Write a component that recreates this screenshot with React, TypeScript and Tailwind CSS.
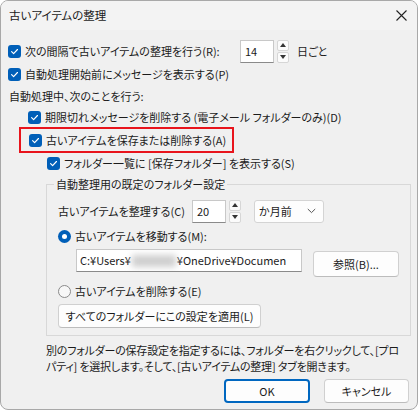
import React from 'react';

const font = { fontFamily: '"Noto Sans CJK JP", "Noto Sans", sans-serif' };

function Check() {
  return (
    <span className="inline-flex h-[13px] w-[13px] shrink-0 items-center justify-center rounded-[3px] bg-[#005fb8]">
      <svg width="9" height="9" viewBox="0 0 10 10" fill="none">
        <path d="M1.8 5.2 L4 7.3 L8.3 2.8" stroke="white" strokeWidth="1.3" strokeLinecap="round" strokeLinejoin="round" />
      </svg>
    </span>
  );
}

function Radio({ on }: { on?: boolean }) {
  return on ? (
    <span className="inline-flex h-[13px] w-[13px] shrink-0 items-center justify-center rounded-full bg-[#005fb8]">
      <span className="h-[5px] w-[5px] rounded-full bg-white" />
    </span>
  ) : (
    <span className="inline-block h-[13px] w-[13px] shrink-0 rounded-full border border-[#8a8a8a] bg-[#f7f7f7]" />
  );
}

function Spinner() {
  return (
    <div className="ml-[3px] flex h-[23px] w-[12px] flex-col gap-[1px]">
      <div className="flex flex-1 items-center justify-center rounded-[2px] border border-[#d6d6d6] bg-[#fbfbfb]">
        <svg width="6" height="4" viewBox="0 0 6 4"><path d="M0 4 L3 0 L6 4 Z" fill="#333" /></svg>
      </div>
      <div className="flex flex-1 items-center justify-center rounded-[2px] border border-[#d6d6d6] bg-[#fbfbfb]">
        <svg width="6" height="4" viewBox="0 0 6 4"><path d="M0 0 L6 0 L3 4 Z" fill="#333" /></svg>
      </div>
    </div>
  );
}

function Btn({ children, className = '' }: { children: React.ReactNode; className?: string }) {
  return (
    <div className={`flex items-center justify-center rounded-[4px] border border-[#d0d0d0] border-b-[#bcbcbc] bg-[#fdfdfd] ${className}`}>
      {children}
    </div>
  );
}

export default function App() {
  return (
    <div className="h-[410px] w-[418px] whitespace-nowrap bg-white text-[11px] text-[#1b1b1b] [font-feature-settings:'palt']" style={font}>
      <div className="flex h-full w-full flex-col overflow-hidden rounded-[8px] border border-[#a8a8a8] bg-[#f0f0f0]">
        {/* title bar */}
        <div className="flex h-[29px] shrink-0 items-center justify-between bg-[#f3f3f3] pl-[8px] pr-[10px]">
          <span className="text-[11.5px]">古いアイテムの整理</span>
          <svg width="11" height="11" viewBox="0 0 11 11">
            <path d="M0.5 0.5 L10.5 10.5 M10.5 0.5 L0.5 10.5" stroke="#222" strokeWidth="1.1" />
          </svg>
        </div>

        <div className="flex flex-col pl-[7px] pr-[6px]">
          {/* row 1 */}
          <div className="mt-[9px] flex h-[24px] items-center">
            <Check />
            <span className="ml-[4px] w-[215px]">次の間隔で古いアイテムの整理を行う(R):</span>
            <div className="flex h-[23px] w-[34px] items-center border border-[#c8c8c8] border-b-[#8a8a8a] bg-white pl-[4px]">14</div>
            <Spinner />
            <span className="ml-[8px]">日ごと</span>
          </div>
          {/* row 2 */}
          <div className="flex h-[22px] items-center">
            <Check />
            <span className="ml-[4px]">自動処理開始前にメッセージを表示する(P)</span>
          </div>
          {/* row 3 */}
          <div className="flex h-[22px] items-center pl-[1px]">自動処理中、次のことを行う:</div>
          {/* row 4 */}
          <div className="flex h-[20px] items-center pl-[20px]">
            <Check />
            <span className="ml-[4px]">期限切れメッセージを削除する (電子メール フォルダーのみ)(D)</span>
          </div>
          {/* row 5 highlighted */}
          <div className="ml-[11px] flex h-[26px] w-[215px] items-center border-2 border-[#e8141c] pl-[8px]">
            <Check />
            <span className="ml-[4px]">古いアイテムを保存または削除する(A)</span>
          </div>
          {/* row 6 */}
          <div className="flex h-[21px] items-center pl-[39px]">
            <Check />
            <span className="ml-[4px]">フォルダー一覧に [保存フォルダー] を表示する(S)</span>
          </div>

          {/* group */}
          <fieldset className="ml-[38px] mt-[1px] border border-[#d8d8d8] pb-[7px] pl-[11px]">
            <legend className="-ml-[4px] px-[2px] leading-[18px]">自動整理用の既定のフォルダー設定</legend>
            <div className="mt-[7px] flex h-[22px] items-center">
              <span className="w-[134px]">古いアイテムを整理する(C)</span>
              <div className="flex h-[23px] w-[34px] items-center border border-[#c8c8c8] border-b-[#8a8a8a] bg-white pl-[4px]">20</div>
              <Spinner />
              <div className="ml-[13px] flex h-[23px] w-[70px] items-center justify-between rounded-[3px] border border-[#d4d4d4] bg-[#fdfdfd] pl-[4px] pr-[7px]">
                <span>か月前</span>
                <svg width="9" height="6" viewBox="0 0 9 6"><path d="M0.8 1 L4.5 4.6 L8.2 1" stroke="#555" strokeWidth="1" fill="none" /></svg>
              </div>
            </div>
            <div className="mt-[5px] flex h-[18px] items-center">
              <Radio on />
              <span className="ml-[4px]">古いアイテムを移動する(M):</span>
            </div>
            <div className="mt-[4px] flex items-start">
              <div className="ml-[18px] flex h-[23px] w-[226px] shrink-0 items-center overflow-hidden border border-[#c8c8c8] border-b-[#8a8a8a] bg-white pl-[3px]">
                <span>C:¥Users¥</span>
                <span className="mx-[1px] inline-block h-[12px] w-[44px] shrink-0 bg-[#cfcfcf] blur-[3px]" />
                <span>¥OneDrive¥Documen</span>
              </div>
              <Btn className="ml-[11px] mt-[2px] h-[26px] w-[86px] shrink-0">参照(B)...</Btn>
            </div>
            <div className="mt-[5px] flex h-[18px] items-center">
              <Radio />
              <span className="ml-[4px]">古いアイテムを削除する(E)</span>
            </div>
            <Btn className="mt-[4px] h-[24px] w-[203px]">すべてのフォルダーにこの設定を適用(L)</Btn>
          </fieldset>

          <p className="ml-[38px] mt-[6px] leading-[16px] tracking-[-0.2px]">
            別のフォルダーの保存設定を指定するには、フォルダーを右クリックして、[プロ
            <br />
            パティ] を選択します。そして、[古いアイテムの整理] タブを開きます。
          </p>

          <div className="mt-[5px] flex justify-end gap-[14px] pr-[2px]">
            <div className="flex h-[24px] w-[86px] items-center justify-center rounded-[4px] border-2 border-[#0067c0] bg-[#fdfdfd]">OK</div>
            <Btn className="h-[24px] w-[85px]">キャンセル</Btn>
          </div>
        </div>
      </div>
    </div>
  );
}
